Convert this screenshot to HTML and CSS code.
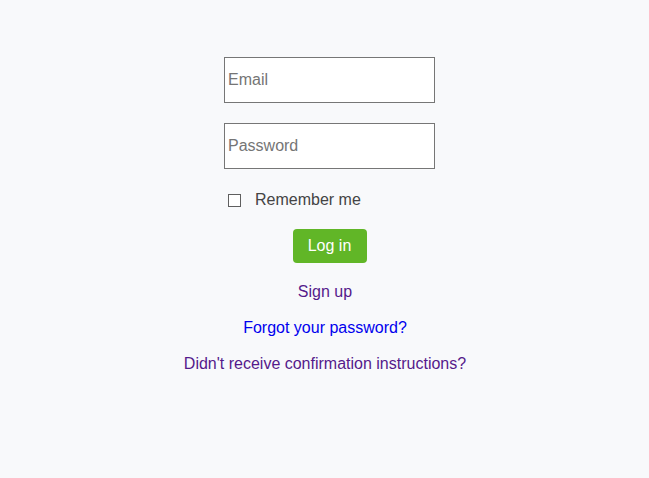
FILE: index.html
```html
<!DOCTYPE html>
<html>
<head>
<meta charset="utf-8">
<link rel="stylesheet" href="styles.css">
</head>
<body>
<main class="page">
  <form class="login">
    <input class="field" type="email" placeholder="Email">
    <input class="field" type="password" placeholder="Password">
    <label class="remember"><input class="check" type="checkbox"><span>Remember me</span></label>
    <div class="actions"><button class="btn" type="button">Log in</button></div>
  </form>
  <nav class="links">
    <a class="link visited" href="#">Sign up</a>
    <a class="link fresh" href="#">Forgot your password?</a>
    <a class="link visited" href="#">Didn't receive confirmation instructions?</a>
  </nav>
</main>
</body>
</html>
```
FILE: styles.css
```css
html, body {
  margin: 0;
  padding: 0;
  background: #f8f9fb;
  font-family: "Liberation Sans", Arial, sans-serif;
  font-size: 16px;
}
.page {
  display: flex;
  flex-direction: column;
  align-items: center;
  padding-top: 57px;
}
.login {
  width: 211px;
  padding-left: 10px;
  display: flex;
  flex-direction: column;
}
.field {
  box-sizing: border-box;
  width: 211px;
  height: 46px;
  margin: 0 0 20px 0;
  padding: 0 3px;
  border: 1px solid #767676;
  border-radius: 0;
  background: #fff;
  font-family: "Liberation Sans", Arial, sans-serif;
  font-size: 16px;
  color: #333;
  outline: none;
}
.field::placeholder {
  color: #757575;
}
.remember {
  display: flex;
  align-items: center;
  margin-top: 2px;
  height: 18px;
  color: #444;
  font-size: 16px;
}
.check {
  appearance: none;
  -webkit-appearance: none;
  box-sizing: border-box;
  margin: 0 14px 0 4px;
  width: 13px;
  height: 13px;
  border: 1px solid #5f5f5f;
  border-radius: 0;
  background: #fff;
}
.actions {
  display: flex;
  justify-content: center;
  margin-top: 20px;
}
.btn {
  width: 74px;
  height: 34px;
  border: none;
  border-radius: 4px;
  background: #61b627;
  color: #fff;
  font-family: "Liberation Sans", Arial, sans-serif;
  font-size: 16px;
  padding: 0;
}
.links {
  display: flex;
  flex-direction: column;
  align-items: center;
  margin-top: 19px;
  padding-left: 1px;
  gap: 17px;
}
.link {
  text-decoration: none;
  font-size: 16px;
  line-height: 19px;
}
.visited { color: #551a8b; }
.fresh { color: #0000ee; }
```
